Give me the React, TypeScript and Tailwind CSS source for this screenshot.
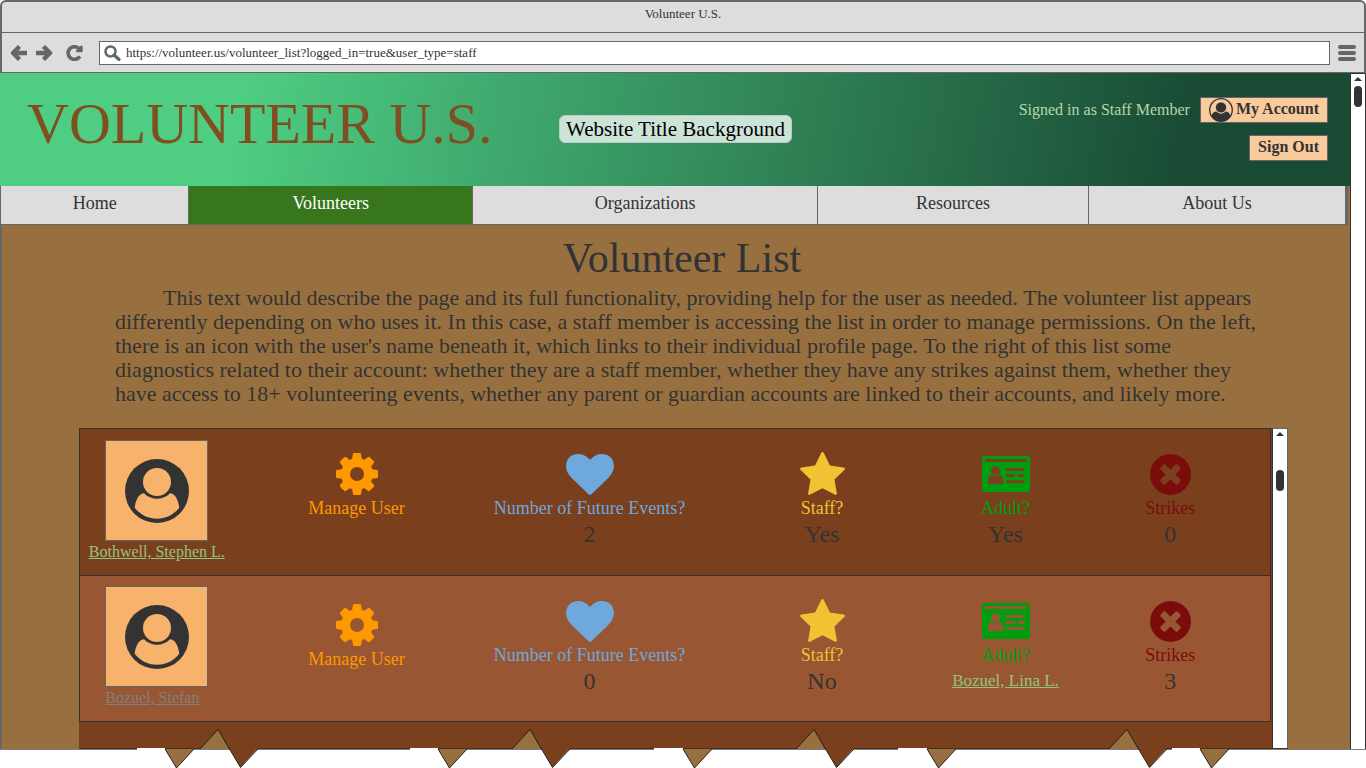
import React from "react";

const COG =
  "M1024 896q0-106-75-181t-181-75-181 75-75 181 75 181 181 75 181-75 75-181zm512-109v222q0 12-8 23t-20 13l-185 28q-19 54-39 91 35 50 107 138 10 12 10 25t-9 23q-27 37-99 108t-94 71q-12 0-26-9l-138-108q-44 23-91 38-16 136-29 186-7 28-36 28h-222q-14 0-24.5-8.5t-11.5-21.5l-28-184q-49-16-90-37l-141 107q-10 9-25 9-14 0-25-11-126-114-165-168-7-10-7-23 0-12 8-23 15-21 51-66.5t54-70.5q-27-50-41-99l-183-27q-13-2-21-12.5t-8-23.5v-222q0-12 8-23t19-13l186-28q14-46 39-92-40-57-107-138-10-12-10-24 0-10 9-23 26-36 98.5-107.5t94.5-71.5q13 0 26 10l138 107q44-23 91-38 16-136 29-186 7-28 36-28h222q14 0 24.5 8.5t11.5 21.5l28 184q49 16 90 37l142-107q9-9 24-9 13 0 25 10 129 119 165 170 7 8 7 22 0 12-8 23-15 21-51 66.5t-54 70.5q26 50 41 98l183 28q13 2 21 12.5t8 23.5z";
const HEART =
  "M896 1664q-26 0-44-18l-624-602q-10-8-27.5-26t-55.5-65.5-68-97.5-53.5-121-23.5-138q0-220 127-344t351-124q62 0 126.5 21.5t120 58 95.5 68.5 76 68q36-36 76-68t95.5-68.5 120-58 126.5-21.5q224 0 351 124t127 344q0 221-229 450l-623 600q-18 18-44 18z";
const STAR =
  "M1728 647q0 22-26 48l-363 354 86 500q1 7 1 20 0 21-10.5 35.5t-30.5 14.5q-19 0-40-12l-449-236-449 236q-22 12-40 12-21 0-31.5-14.5t-10.5-35.5q0-6 2-20l86-500-364-354q-25-27-25-48 0-37 56-46l502-73 225-455q19-41 49-41t49 41l225 455 502 73q56 9 56 46z";
const CROSS =
  "M1277 1122q0-26-19-45l-181-181 181-181q19-19 19-45 0-27-19-46l-90-90q-19-19-46-19-26 0-45 19l-181 181-181-181q-19-19-45-19-27 0-46 19l-90 90q-19 19-19 46 0 26 19 45l181 181-181 181q-19 19-19 45 0 27 19 46l90 90q19 19 46 19 26 0 45-19l181-181 181 181q19 19 45 19 27 0 46-19l90-90q19-19 19-46zm387-226q0 209-103 385.5t-279.5 279.5-385.5 103-385.5-103-279.5-279.5-103-385.5 103-385.5 279.5-279.5 385.5-103 385.5 103 279.5 279.5 103 385.5z";
const RELOAD =
  "M1664 256v448q0 26-19 45t-45 19h-448q-42 0-59-40-17-39 14-69l138-138q-148-137-349-137-104 0-198.5 40.5t-163.5 109.5-109.5 163.5-40.5 198.5 40.5 198.5 109.5 163.5 163.5 109.5 198.5 40.5q119 0 225-52t179-147q7-10 23-12 15 0 25 9l137 138q9 8 9.5 20.5t-7.5 22.5q-109 132-264 204.5t-327 72.5q-156 0-298-61t-245-164-164-245-61-298 61-298 164-245 245-164 298-61q147 0 284.5 55.5t244.5 156.5l130-129q29-31 70-14 39 17 39 59z";

function ArrowIcon({ right = false }: { right?: boolean }) {
  return (
    <svg width="18" height="16" viewBox="0 0 18 16" fill="none" stroke="#666" strokeWidth="4.4" strokeLinejoin="round" aria-hidden="true">
      <path d={right ? "M0 8H13M7.5 1.5L14 8L7.5 14.5" : "M17 8H4M9.5 1.5L3 8L9.5 14.5"} />
    </svg>
  );
}

function AvatarIcon() {
  return (
    <svg width="64" height="64" viewBox="0 0 64 64" aria-hidden="true">
      <circle cx="32" cy="32" r="32" fill="#333" />
      <circle cx="32" cy="23" r="14" fill="#f7b26c" />
      <path
        d="M9.7 48.7C10.7 40.5 14 34.5 19 34.2C26 41.5 38 41.5 45 34.2C50 34.5 53.3 40.5 54.3 48.7C48 56.5 40 59.7 32 59.7C24 59.7 16 56.5 9.7 48.7Z"
        fill="#f7b26c"
      />
    </svg>
  );
}

function AccountIcon() {
  return (
    <svg width="24" height="24" viewBox="0 0 24 24" aria-hidden="true">
      <circle cx="12" cy="12" r="11.3" fill="none" stroke="#333" strokeWidth="1.3" />
      <circle cx="12" cy="9.4" r="5.2" fill="#333" />
      <path d="M2.4 18C3.5 15 5 13.6 7.6 13.6C10 16.4 14 16.4 16.4 13.6C19 13.6 20.5 15 21.6 18C19.5 21.6 16 23.4 12 23.4C8 23.4 4.5 21.6 2.4 18Z" fill="#333" />
    </svg>
  );
}

function CardIcon({ cut }: { cut: string }) {
  return (
    <svg width="48" height="36" viewBox="0 0 48 36" aria-hidden="true">
      <rect width="48" height="36" rx="3" fill="#009e0f" />
      <g fill={cut}>
        <path d="M3 3H45V6H3ZM24 12H42.5V15H24ZM24 18H33V21H24ZM36 18H42.5V21H36ZM24 24H42.5V27H24Z" />
        <circle cx="13.5" cy="14.8" r="4.5" />
        <path d="M9.2 18.6Q13.5 21.6 17.8 18.6Q21.3 19.2 21.3 26Q21.3 28.2 19 28.2H8.2Q6 28.2 6 26Q6 19.2 9.2 18.6Z" />
      </g>
    </svg>
  );
}

function Metric({ icon, label, color, low = false, children }: {
  icon: React.ReactNode;
  label: React.ReactNode;
  color: string;
  low?: boolean;
  children?: React.ReactNode;
}) {
  return (
    <td className={`align-top text-center ${low ? "pt-7" : "pt-6"}`}>
      <div className="flex h-[42px] items-center justify-center">{icon}</div>
      <div className={`text-lg/[26px] whitespace-nowrap ${color}`}>{label}</div>
      {children && <div className="text-2xl/[26px] whitespace-nowrap">{children}</div>}
    </td>
  );
}

type Volunteer = {
  name: string;
  row: string;
  shade: string;
  nameStyle: string;
  low: boolean;
  events: number;
  staff: string;
  adult: React.ReactNode;
  strikes: number;
};

const volunteers: Volunteer[] = [
  {
    name: "Bothwell, Stephen L.",
    row: "h-[147px] bg-[#7a3f1d]",
    shade: "#7a3f1d",
    nameStyle: "justify-center text-[#93c47d]",
    low: false,
    events: 2,
    staff: "Yes",
    adult: "Yes",
    strikes: 0,
  },
  {
    name: "Bozuel, Stefan",
    row: "h-[146px] bg-[#995633]",
    shade: "#995633",
    nameStyle: "justify-start text-[#808080]",
    low: true,
    events: 0,
    staff: "No",
    adult: (
      <a href="#lina" className="block text-[17px]/[26px] text-[#93c47d] underline">
        Bozuel, Lina L.
      </a>
    ),
    strikes: 3,
  },
];

function VolunteerRow({ v }: { v: Volunteer }) {
  return (
    <tr className={`border border-[#333] ${v.row}`}>
      <td className={`pr-1 align-top ${v.low ? "pt-[10px]" : "pt-[11px]"}`}>
        <div className="mx-auto w-[103px]">
          <div className="flex h-[101px] items-center justify-center border border-[#666] bg-[#f7b26c]">
            <AvatarIcon />
          </div>
          <div className={`flex whitespace-nowrap text-base/[22px] ${v.nameStyle}`}>
            <a href="#profile" className="underline">{v.name}</a>
          </div>
        </div>
      </td>
      <Metric
        low={v.low}
        icon={<svg width="42" height="42" viewBox="0 128 1536 1536" fill="#ff9900" aria-hidden="true"><path d={COG} /></svg>}
        label={<a href="#manage">Manage User</a>}
        color="text-[#ff9900]"
      />
      <Metric
        icon={<svg width="48" height="41" viewBox="0 128 1792 1536" fill="#6fa8dc" aria-hidden="true"><path d={HEART} /></svg>}
        label="Number of Future Events?"
        color="text-[#6fa8dc]"
      >
        {String(v.events)}
      </Metric>
      <Metric
        icon={<svg width="45" height="45" viewBox="64 32 1664 1664" fill="#f1c232" aria-hidden="true"><path d={STAR} /></svg>}
        label="Staff?"
        color="text-[#f1c232]"
      >
        {v.staff}
      </Metric>
      <Metric icon={<CardIcon cut={v.shade} />} label="Adult?" color="text-[#009e0f]">
        {v.adult}
      </Metric>
      <Metric
        icon={<svg width="41" height="41" viewBox="128 128 1536 1536" fill="#7b0c0c" aria-hidden="true"><path d={CROSS} /></svg>}
        label="Strikes"
        color="text-[#7b0c0c]"
      >
        {String(v.strikes)}
      </Metric>
    </tr>
  );
}

function TornEdge() {
  const peaks = [200, 512, 796, 1109];
  const tans = [165, 438, 683, 927, 1200];
  return (
    <svg className="relative -mt-[21px] block h-10 w-full" viewBox="0 0 1366 40" preserveAspectRatio="none" aria-hidden="true">
      <path d="M0 20.5H1366" stroke="#7d7d7d" />
      <path d="M80 19.5H1288" stroke="#46301f" />
      <path d="M137 20H165M410 20H438M654 20H683M898 20H927M1172 20H1200" stroke="#fff" strokeWidth="2" />
      {tans.map((x) => (
        <g key={x}>
          <path d={`M${x} 20L${x + 11.5} 39L${x + 29} 20Z`} fill="#98703f" />
          <path d={`M${x} 20L${x + 11.5} 39L${x + 29} 20`} fill="none" stroke="#222" />
        </g>
      ))}
      {peaks.map((x) => (
        <g key={x}>
          <path d={`M${x} 20L${x + 18} 0.5L${x + 29} 20Z`} fill="#98703f" />
          <path d={`M${x + 29} 19L${x + 40.5} 38.5L${x + 58} 19Z`} fill="#7a3f1d" />
          <path d={`M${x} 20L${x + 18} 0.5L${x + 40.5} 38.5L${x + 58} 20`} fill="none" stroke="#222" />
        </g>
      ))}
    </svg>
  );
}

function ScrollBar({ className, thumb }: { className: string; thumb: string }) {
  return (
    <div className={`flex shrink-0 flex-col items-center bg-white ${className}`}>
      <svg width="8" height="4" viewBox="0 0 8 4" className="mt-[3px]" aria-hidden="true">
        <path d="M0 4L4 0L8 4Z" fill="#333" />
      </svg>
      <div className={`h-[21px] w-2 rounded bg-[#333] ${thumb}`} />
    </div>
  );
}

const nav = [
  { label: "Home", style: "grow-[188] bg-[#ddd]" },
  { label: "Volunteers", style: "grow-[284] bg-[#38761d] text-white" },
  { label: "Organizations", style: "grow-[345] bg-[#ddd]" },
  { label: "Resources", style: "grow-[271] bg-[#ddd]" },
  { label: "About Us", style: "grow-[257] bg-[#ddd]" },
];

export default function App() {
  return (
    <div className="overflow-hidden bg-white font-['Liberation_Serif',serif] text-[#333]">
      <header className="rounded-t-md border-x-2 border-t-2 border-b border-[#666] bg-[#ddd]">
        <div className="border-b border-[#666] pb-[6px] text-center text-[13px]/6">Volunteer U.S.</div>
        <div className="flex h-[39px] items-center px-2">
          <button aria-label="Back"><ArrowIcon /></button>
          <button aria-label="Forward" className="ml-2"><ArrowIcon right /></button>
          <button aria-label="Reload" className="ml-3">
            <svg width="17" height="16" viewBox="88 88 1616 1616" fill="#666" stroke="#666" strokeWidth="110" aria-hidden="true"><path d={RELOAD} /></svg>
          </button>
          <label className="ml-4 flex h-6 grow items-center border border-[#666] bg-white pl-1">
            <svg width="17" height="16" viewBox="0 0 17 16" fill="none" stroke="#666" aria-hidden="true">
              <circle cx="6.5" cy="6.5" r="5" strokeWidth="2.5" />
              <path d="M10 10L15 14.5" strokeWidth="3.2" strokeLinecap="round" />
            </svg>
            <input
              aria-label="Address"
              readOnly
              value="https://volunteer.us/volunteer_list?logged_in=true&user_type=staff"
              className="ml-[5px] min-w-0 grow bg-transparent text-[13px] outline-none"
            />
          </label>
          <button aria-label="Menu" className="ml-2 flex w-[18px] flex-col gap-[2px]">
            <span className="h-1 rounded-sm bg-[#666]" />
            <span className="h-1 rounded-sm bg-[#666]" />
            <span className="h-1 rounded-sm bg-[#666]" />
          </button>
        </div>
      </header>

      <div className="flex">
        <div className="min-w-0 grow bg-[#98703f]">
          <div className="flex h-[113px] bg-[linear-gradient(100deg,#4ecd83_18%,#194a34_88%)]">
            <div className="grow basis-0 pt-[18px] pl-[27px] text-[58px]/[66px] whitespace-nowrap text-[#7f4f21]">VOLUNTEER U.S.</div>
            <div className="pt-[42px] pr-1">
              <div className="rounded-md border border-[#bcccc2] bg-[#cce3d7] px-[6px] text-[21px]/[26px] whitespace-nowrap text-black">
                Website Title Background
              </div>
            </div>
            <div className="flex grow basis-0 flex-col items-end gap-3 pt-6 pr-[22px]">
              <div className="flex items-center">
                <span className="mr-[10px] text-base/[24px] whitespace-nowrap text-[#b6d7a8]">Signed in as Staff Member</span>
                <button className="flex h-[26px] items-center gap-[3px] border border-[#666] bg-[#f9cb9c] px-2 text-base/5 font-bold whitespace-nowrap">
                  <AccountIcon />
                  <span className="pb-[2px]">My Account</span>
                </button>
              </div>
              <button className="h-[26px] border border-[#666] bg-[#f9cb9c] px-2 pb-[2px] text-base/5 font-bold">Sign Out</button>
            </div>
          </div>

          <nav className="mr-[2px] flex border-r-[3px] border-b border-l border-r-[#666] border-b-[#666] border-l-[#666] text-lg/[34px]">
            {nav.map((n, i) => (
              <a
                key={n.label}
                href={`#${n.label}`}
                className={`h-[38px] basis-0 border-[#666] text-center ${i < nav.length - 1 ? "border-r" : ""} ${n.style}`}
              >
                {n.label}
              </a>
            ))}
          </nav>

          <main className="border-l-2 border-[#666]">
            <h1 className="pt-2 pl-3 text-center text-[42px]/[50px]">Volunteer List</h1>
            <p className="ml-[113px] pt-[3px] indent-12 text-[22px]/6 whitespace-nowrap">
              This text would describe the page and its full functionality, providing help for the user as needed. The volunteer list appears
              <br />
              differently depending on who uses it. In this case, a staff member is accessing the list in order to manage permissions. On the left,
              <br />
              there is an icon with the user's name beneath it, which links to their individual profile page. To the right of this list some
              <br />
              diagnostics related to their account: whether they are a staff member, whether they have any strikes against them, whether they
              <br />
              have access to 18+ volunteering events, whether any parent or guardian accounts are linked to their accounts, and likely more.
            </p>
            <section className="mt-[22px] mr-[62px] ml-[77px] flex bg-[#7a3f1d]">
              <div className="min-w-0 grow pb-[28px]">
                <table className="w-full table-fixed border-collapse">
                  <colgroup>
                    <col className="w-[158px]" />
                    <col className="w-[238px]" />
                    <col className="w-[228px]" />
                    <col className="w-[237px]" />
                    <col className="w-[130px]" />
                    <col className="w-[200px]" />
                  </colgroup>
                  <tbody>
                    {volunteers.map((v) => (
                      <VolunteerRow key={v.name} v={v} />
                    ))}
                  </tbody>
                </table>
              </div>
              <ScrollBar className="ml-px w-4 border-t border-r border-l border-[#666] border-l-[#333]" thumb="mt-[34px]" />
            </section>
          </main>
        </div>
        <ScrollBar className="w-4 border-x border-t border-[#333]" thumb="mt-[5px]" />
      </div>
      <TornEdge />
    </div>
  );
}
